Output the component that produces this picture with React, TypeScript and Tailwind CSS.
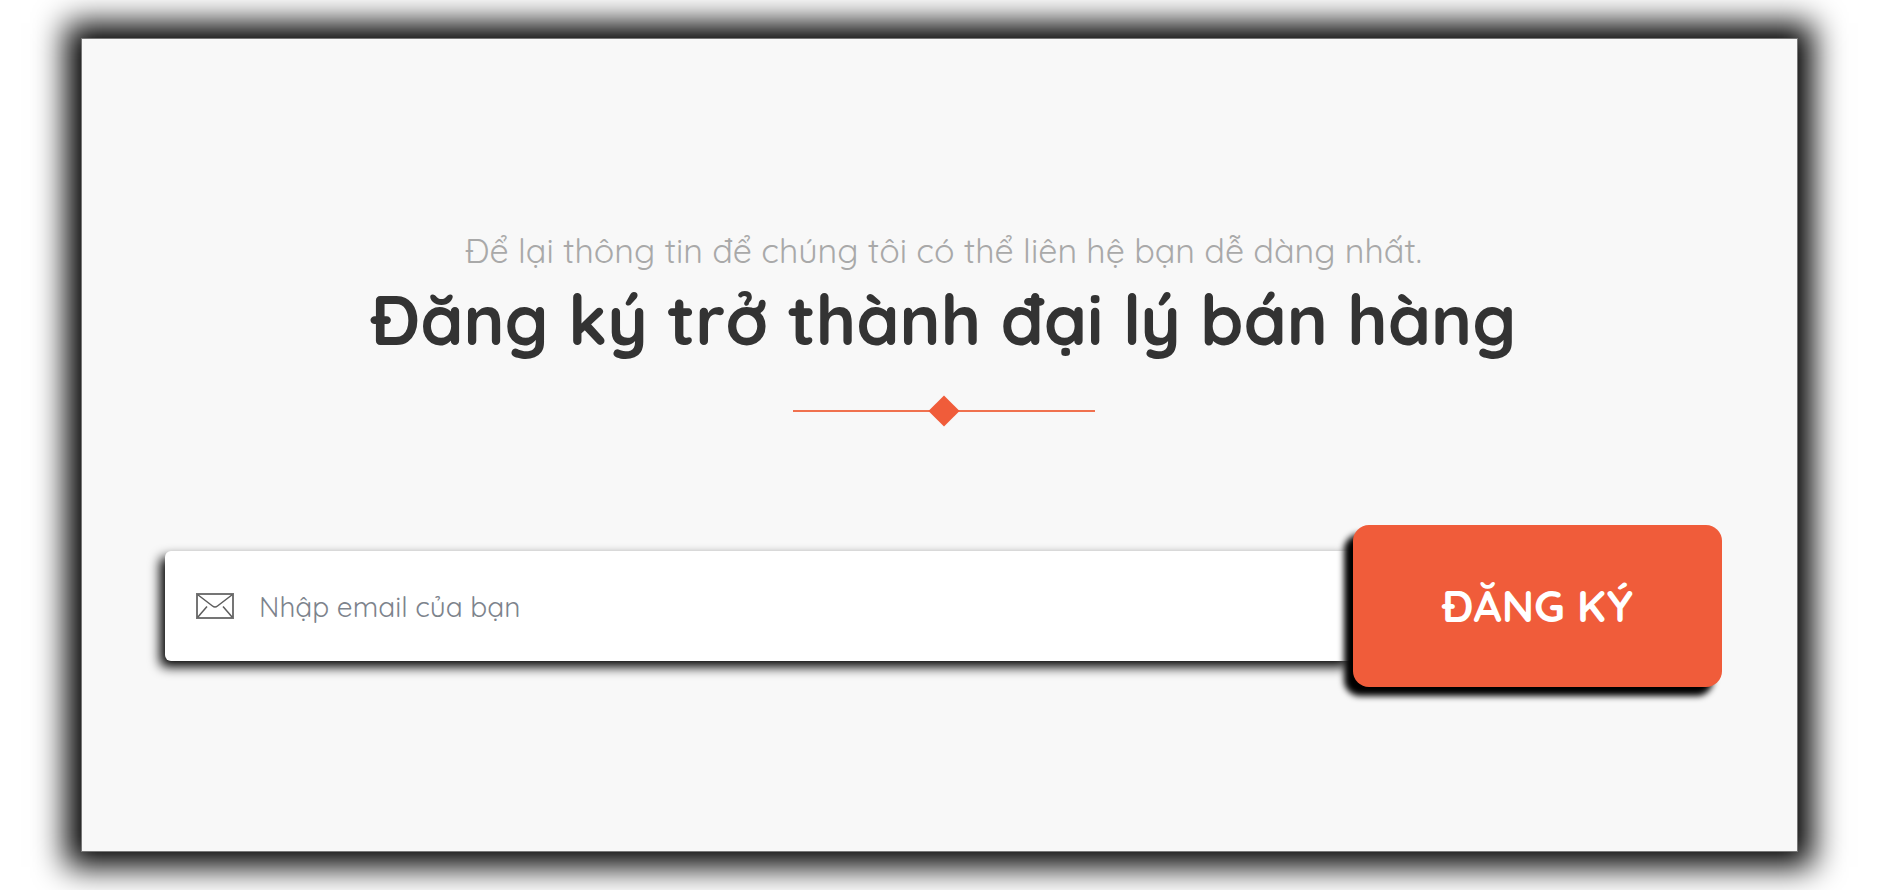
import React, { useState } from 'react';

const MailIcon: React.FC = () => (
  <svg
    width="38"
    height="26"
    viewBox="0 0 38 26"
    fill="none"
    stroke="#5c5c5c"
    strokeWidth="1.5"
    className="shrink-0"
    aria-hidden="true"
  >
    <rect x="1" y="1" width="36" height="24" strokeWidth="2" stroke="#757575" />
    <path d="M1.5 1.5 L16.5 13 Q19 15 21.5 13 L36.5 1.5" />
    <path d="M1.5 24.5 L11 13.5" />
    <path d="M36.5 24.5 L27 13.5" />
  </svg>
);

const Divider: React.FC = () => (
  <div className="mt-[34px] flex h-8 items-center justify-center">
    <span className="h-0.5 w-[142px] bg-[#f0714f]" />
    <span className="-mx-0.5 size-[22px] rotate-45 bg-[#f05c3a]" />
    <span className="h-0.5 w-[142px] bg-[#f0714f]" />
  </div>
);

const App: React.FC = () => {
  const [email, setEmail] = useState('');

  const handleSubmit = (e: React.FormEvent) => {
    e.preventDefault();
    setEmail('');
  };

  return (
    <main className="overflow-hidden bg-white px-[81px] py-[38px] font-['Quicksand','Lato',sans-serif]">
      <section className="border border-[#777777] bg-[#f8f8f8] pt-[186px] pr-[75px] pb-[164px] pl-[83px] shadow-[0_0_30px_15px_#000000]">
        <header className="text-center">
          <p className="text-[34px] leading-[52px] font-normal text-[#a9a9a9]">
            Để lại thông tin để chúng tôi có thể liên hệ bạn dễ dàng nhất.
          </p>
          <h1 className="text-[69px] leading-[84px] font-bold text-[#333333]">
            Đăng ký trở thành đại lý bán hàng
          </h1>
          <Divider />
        </header>

        <form onSubmit={handleSubmit} className="mt-[98px] flex items-center">
          <label className="flex h-[110px] min-w-0 flex-1 items-center gap-[25px] rounded-md bg-white pl-[31px] shadow-[-5px_6px_12px_#000000]">
            <MailIcon />
            <input
              type="email"
              aria-label="Nhập email của bạn"
              placeholder="Nhập email của bạn"
              value={email}
              onChange={(e) => setEmail(e.target.value)}
              className="h-full min-w-0 flex-1 bg-transparent text-[28px] font-normal text-[#333333] outline-none placeholder:text-[#7d838c]"
            />
          </label>
          <button
            type="submit"
            className="h-[162px] w-[369px] shrink-0 rounded-2xl bg-[#f05c3a] text-[44px] font-bold text-white uppercase shadow-[-9px_9px_6px_#000000]"
          >
            Đăng ký
          </button>
        </form>
      </section>
    </main>
  );
};

export default App;
